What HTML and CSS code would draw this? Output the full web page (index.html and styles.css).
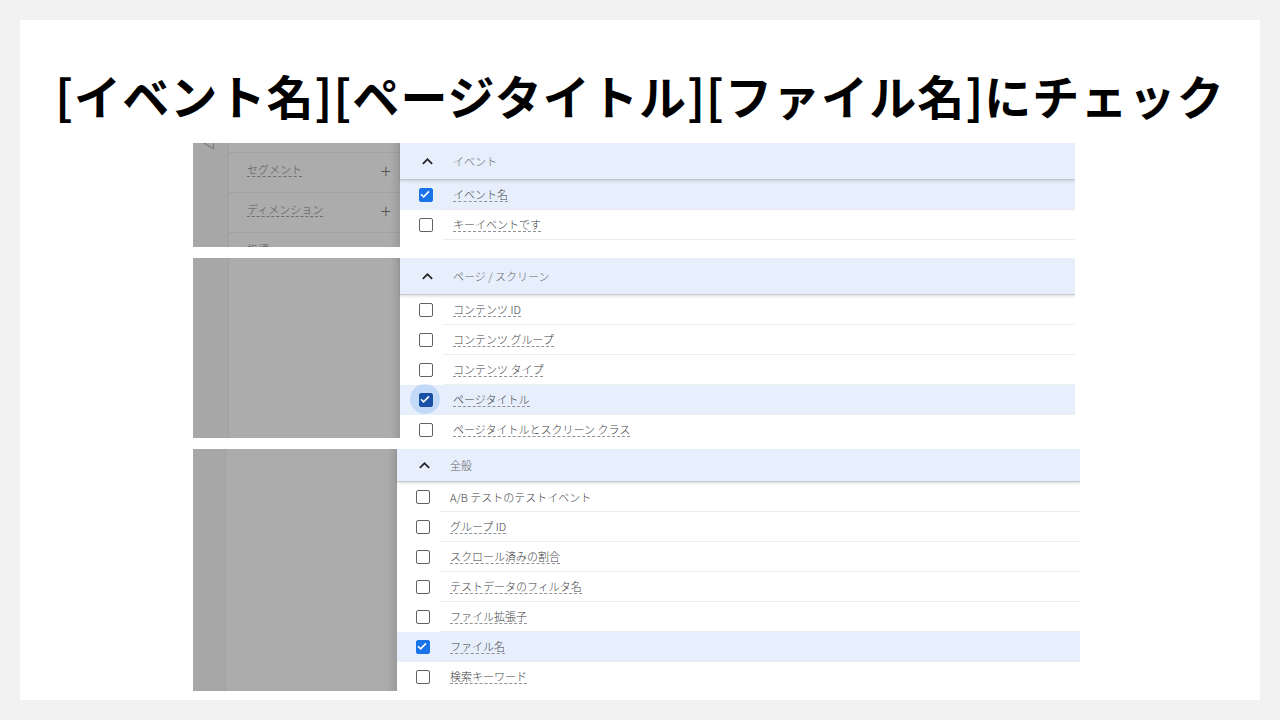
FILE: index.html
```html
<!DOCTYPE html>
<html lang="ja">
<head>
<meta charset="utf-8">
<link rel="stylesheet" href="styles.css">
</head>
<body>
<div class="slide">
  <h1 class="title">[イベント名][ページタイトル][ファイル名]にチェック</h1>
  <div class="shots">
    <!-- panel 1 -->
    <div class="shot shot1">
      <div class="side">
        <div class="strip"><span class="back">◁</span></div>
        <div class="nav">
          <div class="nav-item nav-first"></div>
          <div class="nav-item"><span class="dl">セグメント</span><span class="plus">+</span></div>
          <div class="nav-item"><span class="dl">ディメンション</span><span class="plus">+</span></div>
          <div class="nav-item"><span class="dl">指標</span><span class="plus">+</span></div>
        </div>
      </div>
      <div class="list">
        <div class="head"><svg class="chev" viewBox="0 0 24 24"><path d="M7.41 15.41L12 10.83l4.59 4.58L18 14l-6-6-6 6z"/></svg><span>イベント</span></div>
        <div class="row sel"><div class="cb-cell"><span class="cb on"><svg viewBox="0 0 14 14"><path d="M3 7.2l2.6 2.6L11 4.4"/></svg></span></div><div class="lbl"><span class="dl">イベント名</span></div></div>
        <div class="row"><div class="cb-cell"><span class="cb"></span></div><div class="lbl"><span class="dl">キーイベントです</span></div></div>
      </div>
    </div>
    <!-- panel 2 -->
    <div class="shot shot2">
      <div class="side"><div class="strip"></div><div class="nav"></div></div>
      <div class="list">
        <div class="head"><svg class="chev" viewBox="0 0 24 24"><path d="M7.41 15.41L12 10.83l4.59 4.58L18 14l-6-6-6 6z"/></svg><span>ページ / スクリーン</span></div>
        <div class="row"><div class="cb-cell"><span class="cb"></span></div><div class="lbl"><span class="dl">コンテンツ ID</span></div></div>
        <div class="row"><div class="cb-cell"><span class="cb"></span></div><div class="lbl"><span class="dl">コンテンツ グループ</span></div></div>
        <div class="row"><div class="cb-cell"><span class="cb"></span></div><div class="lbl"><span class="dl">コンテンツ タイプ</span></div></div>
        <div class="row sel"><div class="cb-cell"><span class="cb on focus"><svg viewBox="0 0 14 14"><path d="M3 7.2l2.6 2.6L11 4.4"/></svg></span></div><div class="lbl"><span class="dl">ページタイトル</span></div></div>
        <div class="row"><div class="cb-cell"><span class="cb"></span></div><div class="lbl"><span class="dl">ページタイトルとスクリーン クラス</span></div></div>
      </div>
    </div>
    <!-- panel 3 -->
    <div class="shot shot3">
      <div class="side"><div class="strip"></div><div class="nav"></div></div>
      <div class="list">
        <div class="head"><svg class="chev" viewBox="0 0 24 24"><path d="M7.41 15.41L12 10.83l4.59 4.58L18 14l-6-6-6 6z"/></svg><span>全般</span></div>
        <div class="row"><div class="cb-cell"><span class="cb"></span></div><div class="lbl"><span>A/B テストのテストイベント</span></div></div>
        <div class="row"><div class="cb-cell"><span class="cb"></span></div><div class="lbl"><span class="dl">グループ ID</span></div></div>
        <div class="row"><div class="cb-cell"><span class="cb"></span></div><div class="lbl"><span class="dl">スクロール済みの割合</span></div></div>
        <div class="row"><div class="cb-cell"><span class="cb"></span></div><div class="lbl"><span class="dl">テストデータのフィルタ名</span></div></div>
        <div class="row"><div class="cb-cell"><span class="cb"></span></div><div class="lbl"><span class="dl">ファイル拡張子</span></div></div>
        <div class="row sel"><div class="cb-cell"><span class="cb on"><svg viewBox="0 0 14 14"><path d="M3 7.2l2.6 2.6L11 4.4"/></svg></span></div><div class="lbl"><span class="dl">ファイル名</span></div></div>
        <div class="row"><div class="cb-cell"><span class="cb"></span></div><div class="lbl"><span class="dl">検索キーワード</span></div></div>
      </div>
    </div>
  </div>
</div>
</body>
</html>
```
FILE: styles.css
```css
* { box-sizing: border-box; }
html, body { margin: 0; padding: 0; }
body {
  width: 1280px;
  height: 720px;
  background: #f2f2f2;
  padding: 20px;
  font-family: "Noto Sans CJK JP", "Noto Sans", sans-serif;
}
.slide {
  width: 1240px;
  height: 680px;
  background: #ffffff;
  overflow: hidden;
}
.title {
  margin: 0;
  height: 123px;
  padding-top: 44px;
  text-align: center;
  font-size: 47px;
  line-height: 62px;
  font-weight: 700;
  color: #000;
  letter-spacing: 1.1px;
  white-space: nowrap;
}
.shots {
  display: flex;
  flex-direction: column;
  gap: 11px;
  padding-left: 173px;
}
.shot {
  display: flex;
  overflow: hidden;
  width: 882px;
}
.shot1 { height: 104px; }
.shot2 { height: 180px; }
.shot3 { height: 242px; width: 887px; }

.side {
  width: 207px;
  flex: none;
  display: flex;
  background: #acacac;
  position: relative;
}
.shot3 .side { width: 204px; }
.side::after {
  content: "";
  position: absolute;
  top: 0; right: 0; bottom: 0;
  width: 10px;
  background: linear-gradient(to right, rgba(0,0,0,0), rgba(0,0,0,0.1));
}
.strip {
  width: 36px;
  flex: none;
  background: #a7a7a7;
  border-right: 1px solid #9f9f9f;
  position: relative;
}
.shot3 .strip { width: 33px; }
.back {
  position: absolute;
  top: -9px;
  left: 10px;
  font-size: 12px;
  color: #444;
}
.nav { flex: 1; }
.nav-item {
  height: 40px;
  border-bottom: 1px solid #a2a2a2;
  display: flex;
  align-items: center;
  justify-content: space-between;
  padding: 0 9px 7px 18px;
  font-size: 11px;
  font-weight: 300;
  color: #585858;
}
.nav-first { height: 10px; padding: 0; }
.plus {
  font-size: 19px;
  font-weight: 300;
  color: #555;
  line-height: 1;
}

.list {
  flex: 1;
  background: #fff;
  font-size: 11px;
  font-weight: 300;
  color: #3c4043;
}
.head {
  height: 37px;
  background: #e8effc;
  display: flex;
  align-items: center;
  padding-left: 17px;
  color: #5f6368;
  border-bottom: 1px solid #c3c8d0;
  box-shadow: 0 1px 3px rgba(60,64,67,0.2);
  position: relative;
}
.shot3 .head { height: 33px; }
.chev {
  width: 21px;
  height: 21px;
  fill: #202124;
  margin-right: 15px;
}
.row {
  height: 30px;
  display: flex;
}
.row.sel { background: #e8effc; }
.cb-cell {
  width: 43px;
  flex: none;
  display: flex;
  align-items: center;
  padding-left: 19px;
  position: relative;
  z-index: 0;
}
.shot3 .cb-cell { width: 42px; padding-left: 19px; }
.cb {
  width: 14px;
  height: 14px;
  border: 1.8px solid #5f6368;
  border-radius: 2px;
  display: block;
  position: relative;
}
.cb.on {
  background: #1a73e8;
  border-color: #1a73e8;
}
.cb svg {
  position: absolute;
  left: -1.8px; top: -1.8px;
  width: 14px; height: 14px;
  fill: none;
  stroke: #fff;
  stroke-width: 1.6;
}
.cb.focus {
  background: #1a4fa8;
  border-color: #1a4fa8;
}
.cb.focus::before {
  content: "";
  position: absolute;
  left: -10px; top: -10px;
  width: 30px; height: 30px;
  border-radius: 50%;
  background: rgba(26,115,232,0.18);
  z-index: -1;
}
.lbl {
  flex: 1;
  display: flex;
  align-items: center;
  padding-left: 10px;
  border-bottom: 1px solid #ececec;
}
.shot3 .lbl { padding-left: 11px; }
.dl {
  border-bottom: 1px dashed #8f9399;
  line-height: 14px;
}
.nav-item .dl { border-bottom-color: #6e6e6e; }
```
